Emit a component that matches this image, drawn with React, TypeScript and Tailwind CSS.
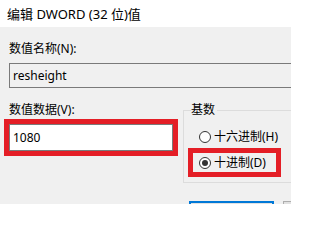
import { FunctionComponent } from 'react'

const font = '[font-family:"Noto_Sans","Noto_Sans_CJK_SC",sans-serif]'

type RadioProps = { checked?: boolean; label: string }

const Radio: FunctionComponent<RadioProps> = ({ checked = false, label }) => (
  <div className="flex h-[16px] items-center gap-[3px] leading-[16px]">
    <span className="flex h-[12px] w-[12px] shrink-0 items-center justify-center rounded-full border border-[#333333] bg-white">
      {checked ? <span className="h-[6px] w-[6px] rounded-full bg-[#333333]" /> : null}
    </span>
    <span>{label}</span>
  </div>
)

export default function App() {
  return (
    <div
      className={`${font} flex h-[204px] w-[291px] flex-col overflow-hidden bg-[#f0f0f0] text-[12px] text-black`}
    >
      {/* Title bar */}
      <div className="flex h-[27px] shrink-0 items-center bg-white pl-[7px] text-[13px] leading-[16px]">
        编辑 DWORD (32 位)值
      </div>

      {/* Value name */}
      <div className="flex flex-col pl-[9px] pt-[14px]">
        <div className="leading-[16px]">数值名称(N):</div>
        <div className="mt-[6px] flex h-[25px] w-[300px] shrink-0 items-center border border-[#7a7a7a] bg-[#f0f0f0] pl-[3px] leading-[16px]">
          resheight
        </div>
      </div>

      {/* Value data + base */}
      <div className="mt-[14px] flex items-start">
        <div className="ml-[4px] flex flex-col">
          <div className="pl-[5px] leading-[16px]">数值数据(V):</div>
          <div className="mt-[1px] border-[5px] border-[#e41e26]">
            <div className="flex h-[27px] w-[164px] items-center border border-[#7a7a7a] bg-white pl-[3px] leading-[16px]">
              1080
            </div>
          </div>
        </div>

        <div className="relative mt-[8px] ml-[5px] h-[73px] w-[120px] shrink-0 border border-[#dcdcdc]">
          <div className="absolute -top-[9px] left-[7px] bg-[#f0f0f0] pr-[2px] leading-[16px]">基数</div>
          <div className="flex flex-col pt-[18px]">
            <div className="pl-[15px]">
              <Radio label="十六进制(H)" />
            </div>
            <div className="mt-[3px] ml-[4px] w-[93px] border-[5px] border-[#e41e26]">
              <div className="flex h-[19px] items-center pl-[6px]">
                <Radio checked label="十进制(D)" />
              </div>
            </div>
          </div>
        </div>
      </div>

      {/* Buttons (cut off at bottom) */}
      <div className="mt-[18px] ml-[189px] flex gap-[9px]">
        <div className="h-[23px] w-[85px] shrink-0 border-2 border-[#0078d7] bg-[#e1e1e1]" />
        <div className="h-[23px] w-[85px] shrink-0 border border-[#adadad] bg-[#e1e1e1]" />
      </div>
    </div>
  )
}
